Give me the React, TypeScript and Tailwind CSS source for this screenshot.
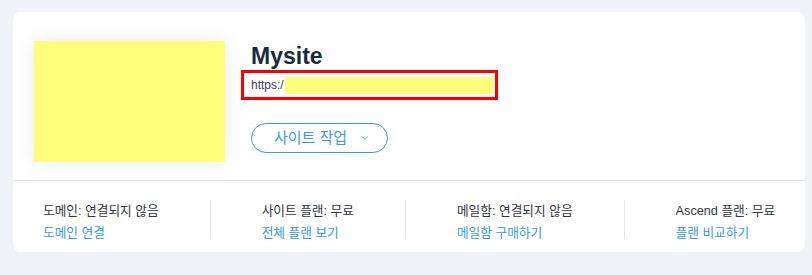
import { ChevronDown } from 'lucide-react';

const stats = [
    { label: '도메인: 연결되지 않음', link: '도메인 연결' },
    { label: '사이트 플랜: 무료', link: '전체 플랜 보기' },
    { label: '메일함: 연결되지 않음', link: '메일함 구매하기' },
    { label: 'Ascend 플랜: 무료', link: '플랜 비교하기' },
];

export default function App() {
    return (
        <div className="w-[812px] h-[275px] bg-[#eff2f6] pt-[12px] pl-[13px] font-['Liberation_Sans','Noto_Sans_CJK_KR',sans-serif]">
            <div className="w-[792px] bg-white rounded-[8px] overflow-hidden">
                {/* Site header */}
                <div className="flex pl-[21px] pt-[29px] pb-[18px] border-b border-[#e3e7ec]">
                    <div className="w-[191px] h-[121px] bg-[#fefe7d] shadow-[0_0_20px_rgba(0,0,0,0.09)] shrink-0"></div>
                    <div className="ml-[26px] flex flex-col items-start">
                        <h1 className="mt-[1px] text-[23px] leading-[28px] font-bold text-[#162d3d]">Mysite</h1>
                        <div className="-ml-[10px] w-[257px] h-[30px] border-[3px] border-[#ff0000] flex items-center pl-[7px]">
                            <span className="text-[12px] leading-[16px] text-[#3b4057]">https:/</span>
                            <div className="ml-[1px] w-[208px] h-[17px] bg-[#fefe7d]"></div>
                        </div>
                        <button className="mt-[23px] w-[137px] h-[30px] rounded-full border border-[#3899ec] flex items-center pl-[22px] text-[15px] leading-[18px] text-[#3899ec]">
                            <span>사이트 작업</span>
                            <ChevronDown className="ml-[13px] w-[10px] h-[10px]" strokeWidth={2} />
                        </button>
                    </div>
                </div>

                {/* Stats row */}
                <div className="flex items-start pl-[30px] pt-[19px] pb-[8px]">
                    {stats.map((s, i) => (
                        <div key={s.label} className="flex items-start">
                            {i > 0 && <div className="w-px h-[39px] bg-[#e3e7ec] mx-[51px]"></div>}
                            <div className="flex flex-col text-[12.7px] leading-[22px] whitespace-nowrap">
                                <span className="text-[#32363e]">{s.label}</span>
                                <a className="text-[#3899ec] cursor-pointer">{s.link}</a>
                            </div>
                        </div>
                    ))}
                </div>
            </div>
        </div>
    );
}
